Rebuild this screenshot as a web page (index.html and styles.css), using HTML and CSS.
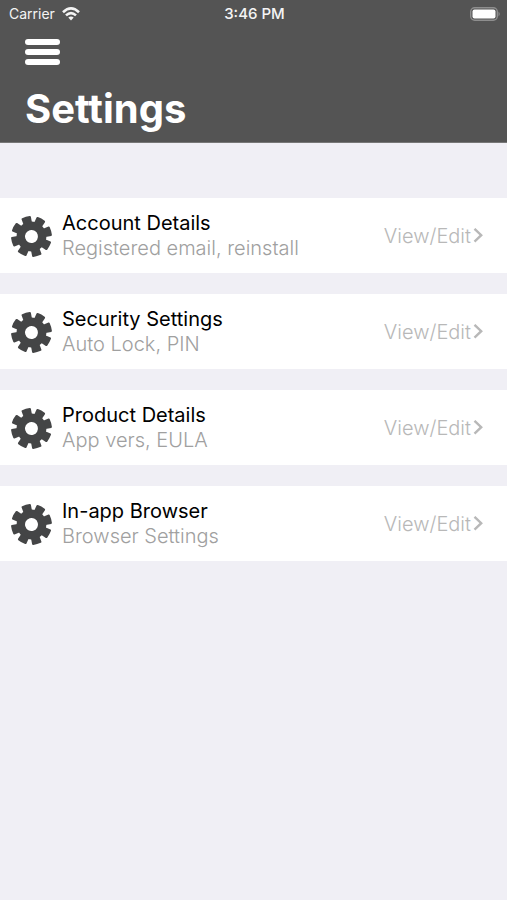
FILE: index.html
```html
<!DOCTYPE html>
<html lang="en">
<head>
<meta charset="utf-8">
<meta name="viewport" content="width=device-width, initial-scale=1">
<title>Settings</title>
<link rel="stylesheet" href="styles.css">
</head>
<body>
<svg class="symbols" aria-hidden="true">
  <symbol id="gear" viewBox="-20 -20 40 40">
    <g transform="rotate(-16)">
      <path fill-rule="evenodd" d="M0-14.500A14.500 14.500 0 1 1 0 14.500A14.500 14.500 0 1 1 0-14.500ZM0-6.300A6.300 6.300 0 1 0 0 6.300A6.300 6.300 0 1 0 0-6.300Z"/>
      <path id="tooth" d="M-4.200-13L-4.700-18.600Q-4.700-19.500-3.800-19.600Q0-20.200 3.800-19.600Q4.700-19.500 4.700-18.600L4.200-13Z"/>
      <use href="#tooth" transform="rotate(45)"/>
      <use href="#tooth" transform="rotate(90)"/>
      <use href="#tooth" transform="rotate(135)"/>
      <use href="#tooth" transform="rotate(180)"/>
      <use href="#tooth" transform="rotate(225)"/>
      <use href="#tooth" transform="rotate(270)"/>
      <use href="#tooth" transform="rotate(315)"/>
    </g>
  </symbol>
  <symbol id="chevron" viewBox="0 0 10 16">
    <path d="M1.500 0.800L8.200 7.200L1.500 13.600" fill="none" stroke="currentColor" stroke-width="2.400"/>
  </symbol>
</svg>
<header class="header">
  <div class="status">
    <div class="carrier">
      <span>Carrier</span>
      <svg class="wifi" viewBox="0 0 18 14" aria-hidden="true">
        <path d="M1 5.200Q9-2.400 17 5.200M4 8.400Q9 3.800 14 8.400" fill="none" stroke="currentColor" stroke-width="2.600"/>
        <path d="M6.300 10.600Q9 8.300 11.700 10.600L9 13.400Z" fill="currentColor"/>
      </svg>
    </div>
    <time class="clock">3:46 PM</time>
    <svg class="battery" viewBox="0 0 30 14" aria-hidden="true">
      <rect x="0.700" y="0.700" width="26.600" height="12.600" rx="4" fill="none" stroke="#8e8e8e" stroke-width="1.400"/>
      <rect x="2.500" y="2.500" width="23" height="9" rx="2" fill="#fff"/>
      <path d="M28.500 4.500Q31 7 28.500 9.500Z" fill="#8e8e8e"/>
    </svg>
  </div>
  <button class="menu" type="button" aria-label="Menu">
    <span></span><span></span><span></span>
  </button>
  <h1 class="title">Settings</h1>
</header>
<main class="list">
  <a class="row" href="#account">
    <svg class="gear" aria-hidden="true"><use href="#gear"/></svg>
    <span class="text"><span class="name">Account Details</span><span class="note">Registered email, reinstall</span></span>
    <span class="action">View/Edit<svg class="chevron" aria-hidden="true"><use href="#chevron"/></svg></span>
  </a>
  <a class="row" href="#security">
    <svg class="gear" aria-hidden="true"><use href="#gear"/></svg>
    <span class="text"><span class="name">Security Settings</span><span class="note">Auto Lock, PIN</span></span>
    <span class="action">View/Edit<svg class="chevron" aria-hidden="true"><use href="#chevron"/></svg></span>
  </a>
  <a class="row" href="#product">
    <svg class="gear" aria-hidden="true"><use href="#gear"/></svg>
    <span class="text"><span class="name">Product Details</span><span class="note">App vers, EULA</span></span>
    <span class="action">View/Edit<svg class="chevron" aria-hidden="true"><use href="#chevron"/></svg></span>
  </a>
  <a class="row" href="#browser">
    <svg class="gear" aria-hidden="true"><use href="#gear"/></svg>
    <span class="text"><span class="name">In-app Browser</span><span class="note">Browser Settings</span></span>
    <span class="action">View/Edit<svg class="chevron" aria-hidden="true"><use href="#chevron"/></svg></span>
  </a>
</main>
</body>
</html>
```
FILE: styles.css
```css
* {
  box-sizing: border-box;
}

body {
  margin: 0;
  background: #f0eff5;
  color: #000;
  font-family: Inter, "Liberation Sans", sans-serif;
}

.symbols {
  position: absolute;
  width: 0;
  height: 0;
}

.header {
  padding-bottom: 9px;
  border-bottom: 1px solid #777;
  background: #545454;
  color: #fff;
}

.status {
  display: grid;
  grid-template-columns: 1fr auto 1fr;
  align-items: center;
  height: 27px;
  padding: 0 7px 0 9px;
  color: #f4f4f4;
  font-size: 14px;
  line-height: 27px;
}

.carrier {
  display: flex;
  align-items: center;
  gap: 7px;
}

.wifi {
  width: 18px;
  height: 14px;
}

.clock {
  font-size: 15px;
  font-weight: 500;
}

.battery {
  justify-self: end;
  width: 30px;
  height: 14px;
}

.menu {
  display: flex;
  flex-direction: column;
  gap: 4px;
  width: 35px;
  margin: 12px 25px 0;
  padding: 0;
  border: 0;
  background: none;
  cursor: pointer;
}

.menu span {
  width: 100%;
  height: 6px;
  border-radius: 3px;
  background: #fff;
}

.title {
  margin: 20px 25px 0;
  font-size: 40px;
  font-weight: 700;
  line-height: 48px;
}

.list {
  display: flex;
  flex-direction: column;
  gap: 21px;
  padding-top: 55px;
}

.row {
  display: flex;
  align-items: center;
  min-height: 75px;
  padding: 1px 24px 0 11px;
  background: #fff;
  color: #000;
  font-size: 20px;
  line-height: 25px;
  text-decoration: none;
}

.gear {
  flex: none;
  width: 41px;
  height: 41px;
  fill: #444546;
}

.text {
  display: flex;
  flex: 1;
  flex-direction: column;
  margin-left: 10px;
}

.note {
  color: #a0a0a0;
  font-weight: 300;
}

.action {
  display: flex;
  align-items: center;
  gap: 2px;
  color: #b8b8b8;
  font-weight: 300;
}

.chevron {
  width: 10px;
  height: 16px;
}
```
